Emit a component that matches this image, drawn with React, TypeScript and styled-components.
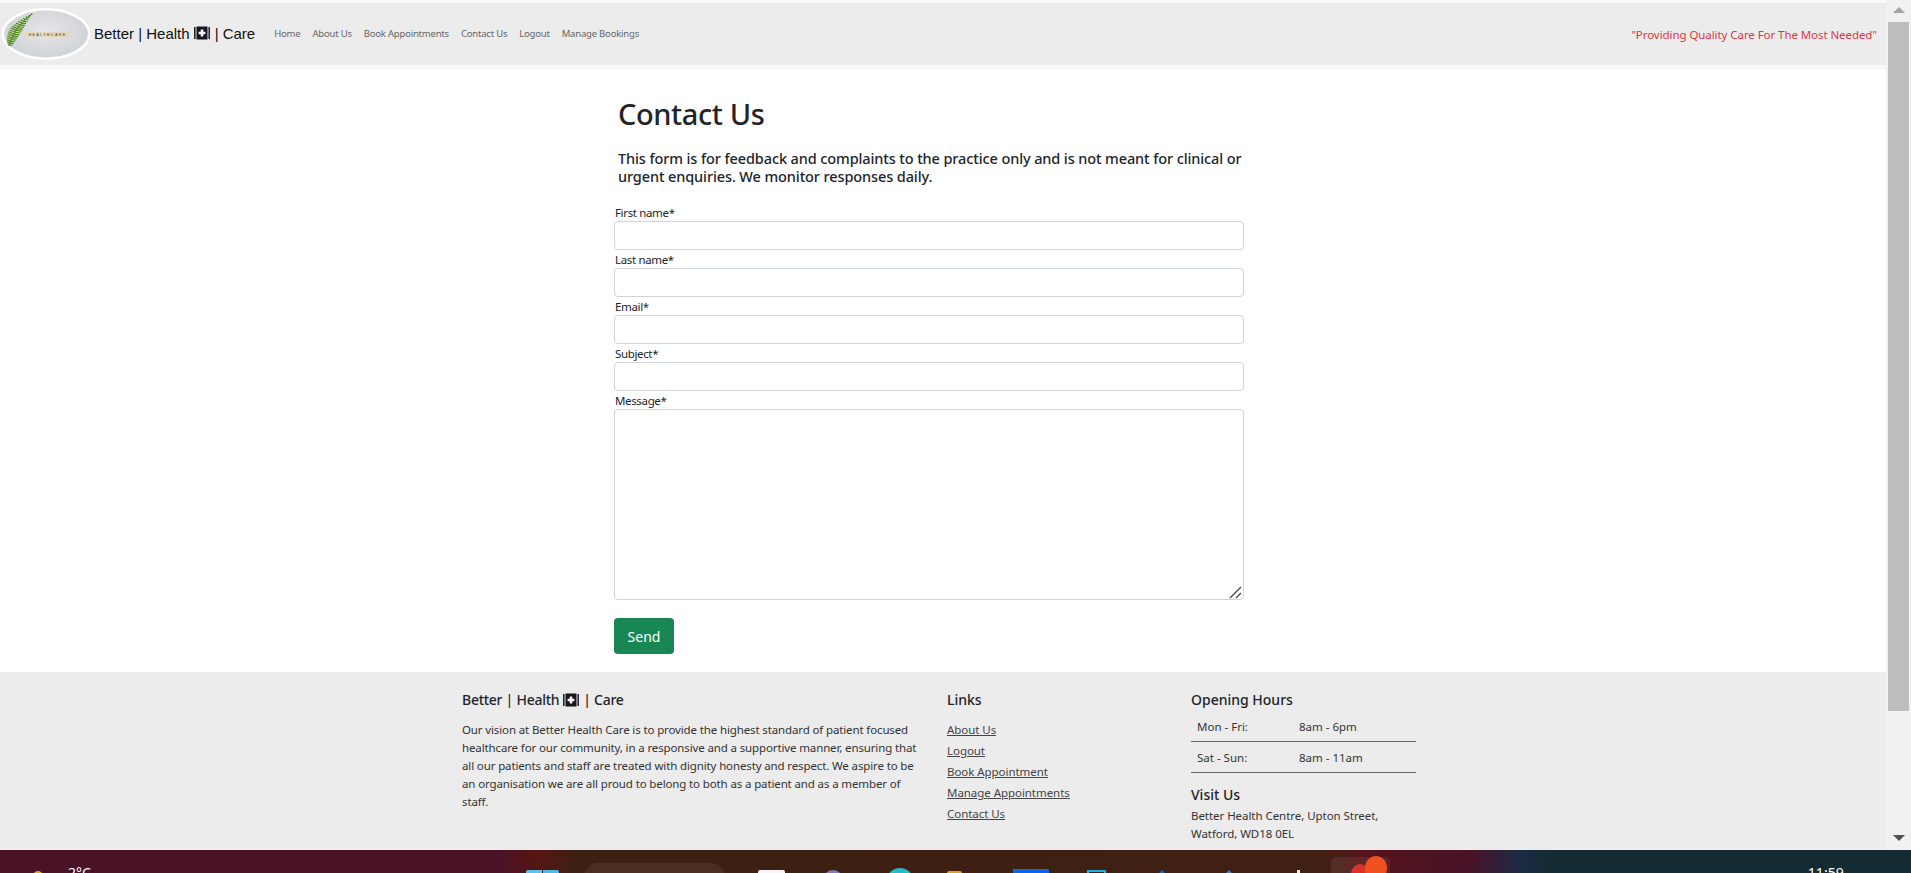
import React from "react";
import styled, { createGlobalStyle } from "styled-components";

const GlobalStyle = createGlobalStyle`
  html, body {
    margin: 0;
    height: 100%;
    overflow: hidden;
    background: #fff;
  }
  * { box-sizing: border-box; }
`;

const UI_FONT = `"Noto Sans", "Open Sans", sans-serif`;

const Screen = styled.div`
  width: 1911px;
  height: 873px;
  display: flex;
  flex-direction: column;
  overflow: hidden;
  font-family: ${UI_FONT};
  color: #212529;
`;

const Viewport = styled.div`
  height: 850px;
  display: flex;
  overflow: hidden;
`;

const Page = styled.div`
  width: 1886px;
  flex-shrink: 0;
`;

const Nav = styled.nav`
  height: 70px;
  padding: 3px 0 5px;
  background: #f8f9fa;
`;

const NavInner = styled.div`
  height: 62px;
  background: #ececec;
  display: flex;
  align-items: center;
  padding-left: 1px;
  padding-right: 9px;
`;

const Logo = styled.svg`
  width: 90px;
  height: 52px;
  flex-shrink: 0;
`;

const Brand = styled.a`
  margin: -2px 0 0 3px;
  font-family: "Liberation Sans", Arial, sans-serif;
  font-size: 15px;
  color: #111;
  display: flex;
  align-items: center;
  gap: 4.5px;
`;

const NavLinks = styled.div`
  display: flex;
  margin-left: 19px;
  gap: 12px;
`;

const NavLink = styled.a`
  font-size: 9.5px;
  letter-spacing: -0.2px;
  color: #666;
  margin-top: -1px;
`;

const Tagline = styled.span`
  margin-left: auto;
  font-size: 11.5px;
  letter-spacing: -0.07px;
  color: #dc3545;
  margin-top: 1px;
`;

const Main = styled.main`
  height: 602px;
  padding-left: 614px;
`;

const Form = styled.form`
  width: 630px;
`;

const Title = styled.h1`
  margin: 0;
  padding: 22px 0 0 4px;
  font-size: 29px;
  letter-spacing: -0.4px;
  line-height: 44px;
  font-weight: 500;
`;

const Notice = styled.p`
  margin: 0;
  padding: 13px 0 0 4px;
  font-size: 14.5px;
  letter-spacing: -0.11px;
  line-height: 18px;
  font-weight: 500;
`;

const Fields = styled.div`
  margin-top: 18px;
`;

const Label = styled.label`
  display: block;
  padding: 1px 0 0 1px;
  font-size: 11.5px;
  letter-spacing: -0.35px;
  line-height: 17px;
  color: #212529;
`;

const Input = styled.input`
  display: block;
  width: 630px;
  height: 29px;
  border: 1px solid #ced4da;
  border-radius: 4px;
  background: #fff;
`;

const MessageBox = styled.div`
  position: relative;
  height: 191px;
`;

const TextArea = styled.textarea`
  display: block;
  width: 630px;
  height: 191px;
  border: 1px solid #ced4da;
  border-radius: 4px;
  background: #fff;
  resize: none;
`;

const ResizeGrip = styled.svg`
  position: absolute;
  right: 2px;
  bottom: 1px;
  width: 13px;
  height: 13px;
`;

const Send = styled.button`
  display: block;
  margin-top: 18px;
  width: 60px;
  height: 36px;
  border: 0;
  border-radius: 4px;
  background: #198754;
  color: #fff;
  font-family: ${UI_FONT};
  font-size: 14px;
`;

const Footer = styled.footer`
  height: 178px;
  background: #ececec;
  padding: 18px 0 0 462px;
  display: grid;
  grid-template-columns: 485px 244px 225px;
  overflow: hidden;
`;

const FooterTitle = styled.h5`
  margin: 0;
  font-size: 14px;
  line-height: 20px;
  font-weight: 500;
  display: flex;
  align-items: center;
  gap: 4px;
`;

const BrandTitle = styled(FooterTitle)`
  letter-spacing: -0.27px;
`;

const FooterText = styled.p`
  margin: 11px 0 0;
  width: 460px;
  font-size: 11.5px;
  letter-spacing: -0.13px;
  line-height: 18px;
  color: #333;
`;

const LinkList = styled.ul`
  list-style: none;
  margin: 9px 0 0;
  padding: 0;
`;

const LinkItem = styled.li`
  font-size: 11.5px;
  letter-spacing: -0.05px;
  line-height: 21px;
`;

const FooterLink = styled.a`
  color: #444;
  text-decoration: underline;
`;

const Hours = styled.div`
  margin-top: 1px;
`;

const HoursRow = styled.div`
  height: 31px;
  display: grid;
  grid-template-columns: 102px 1fr;
  padding: 7px 0 0 6px;
  border-bottom: 1px solid #666;
  font-size: 11.5px;
  line-height: 18px;
  color: #333;
`;

const VisitTitle = styled(FooterTitle)`
  margin-top: 12px;
`;

const Address = styled.p`
  margin: 2px 0 0;
  font-size: 11.5px;
  letter-spacing: -0.05px;
  line-height: 18px;
  color: #333;
`;

const Scrollbar = styled.div`
  flex: 1;
  background: #f1f1f1;
  display: flex;
  flex-direction: column;
  align-items: center;
  padding-top: 7px;
`;

const ArrowUp = styled.div`
  width: 0;
  height: 0;
  border-left: 6px solid transparent;
  border-right: 6px solid transparent;
  border-bottom: 6px solid #a3a3a3;
`;

const Thumb = styled.div`
  width: 21px;
  height: 689px;
  margin-top: 9px;
  background: #bdbdbd;
`;

const ArrowDown = styled.div`
  width: 0;
  height: 0;
  margin-top: 124px;
  border-left: 6px solid transparent;
  border-right: 6px solid transparent;
  border-top: 6px solid #505050;
`;

const Taskbar = styled.div`
  height: 23px;
  display: flex;
  overflow: hidden;
  background: linear-gradient(
    90deg,
    #4a1226 0,
    #4a1226 500px,
    #561513 535px,
    #3b2013 580px,
    #402012 1320px,
    #54141a 1365px,
    #481228 1470px,
    #1c2a44 1520px,
    #132c34 1550px,
    #132c34 100%
  );
`;

const TaskItem = styled.div<{ $left: number; $w: number; $top: number; $bg: string; $round?: string }>`
  flex-shrink: 0;
  margin-left: ${(p) => p.$left}px;
  margin-top: ${(p) => p.$top}px;
  width: ${(p) => p.$w}px;
  height: 24px;
  background: ${(p) => p.$bg};
  border-radius: ${(p) => p.$round || "0"};
`;

const StartButton = styled(TaskItem)`
  background: linear-gradient(90deg, #58c4ee 48%, transparent 48%, transparent 53%, #4cb8ec 53%);
`;

const OutlineTile = styled(TaskItem)`
  background: transparent;
  border: 2px solid ${(p) => p.$bg};
`;

const DiamondTile = styled(TaskItem)`
  height: 14px;
  transform: rotate(45deg);
`;

const TaskText = styled.span<{ $left: number }>`
  flex-shrink: 0;
  margin-left: ${(p) => p.$left}px;
  margin-top: 15px;
  font-family: ${UI_FONT};
  font-size: 14px;
  line-height: 16px;
  color: #fff;
`;

const ActiveTile = styled.div<{ $left: number }>`
  flex-shrink: 0;
  margin-left: ${(p) => p.$left}px;
  margin-top: 7px;
  width: 59px;
  height: 30px;
  border-radius: 5px;
  background: rgba(255, 255, 255, 0.07);
  display: flex;
  justify-content: flex-end;
  padding-right: 3px;
`;

const Badge = styled.div`
  width: 22px;
  height: 24px;
  margin-top: -1px;
  border-radius: 50%;
  background: #f0501e;
  box-shadow: -16px 6px 0 -2px #d8322c;
`;

const CareIcon = () => (
  <svg width="16" height="14" viewBox="0 0 16 14">
    <rect x="0" y="1" width="1.6" height="12" fill="#2a2420" />
    <rect x="14.4" y="1" width="1.6" height="12" fill="#2a2a34" />
    <rect x="2.5" y="0.5" width="11" height="13" fill="#15151c" />
    <path d="M8 3.6v6.8M4.6 7h6.8" stroke="#f4f4f8" strokeWidth="2.6" />
  </svg>
);

// little fern for the logo, one pair of leaflets per step along the stem
const fernLeaves = Array.from({ length: 18 }, (_, i) => {
  const t = i / 17;
  const x = 9 + 6 * t + 16 * t * t;
  const y = 37 - 31 * t;
  const len = 7.5 * Math.sin(Math.PI * Math.min(0.97, t * 0.85 + 0.14));
  return `M${x} ${y}l${-len * 0.75} ${-len * 0.3}M${x} ${y}l${len * 0.7} ${len * 0.1}`;
}).join("");

const LogoMark = () => (
  <Logo viewBox="0 0 90 52">
    <defs>
      <radialGradient id="logoBg" cx="50%" cy="45%" r="60%">
        <stop offset="0%" stopColor="#e5e6e8" />
        <stop offset="100%" stopColor="#cdd0d4" />
      </radialGradient>
    </defs>
    <ellipse cx="45" cy="26" rx="43.2" ry="24.7" fill="url(#logoBg)" stroke="#fff" strokeWidth="2.6" />
    <path d="M8 38 C11 28 18 15 31 6" stroke="#3e6c0e" strokeWidth="1" fill="none" />
    <path d={fernLeaves} stroke="#4f8a12" strokeWidth="1.2" fill="none" />
    <rect x="23" y="24" width="47" height="5" fill="#e4dac0" />
    <text x="46.5" y="28.2" fontSize="3.8" textAnchor="middle" letterSpacing="1.3" fill="#4a4436" fontFamily="Liberation Sans">
      HEALTHCARE
    </text>
  </Logo>
);

const navItems = ["Home", "About Us", "Book Appointments", "Contact Us", "Logout", "Manage Bookings"];
const footerLinks = ["About Us", "Logout", "Book Appointment", "Manage Appointments", "Contact Us"];

export default function App() {
  return (
    <Screen>
      <GlobalStyle />
      <Viewport>
        <Page>
          <Nav>
            <NavInner>
              <LogoMark />
              <Brand>
                Better | Health <CareIcon /> | Care
              </Brand>
              <NavLinks>
                {navItems.map((item) => (
                  <NavLink key={item}>{item}</NavLink>
                ))}
              </NavLinks>
              <Tagline>"Providing Quality Care For The Most Needed"</Tagline>
            </NavInner>
          </Nav>
          <Main>
            <Form>
              <Title>Contact Us</Title>
              <Notice>
                This form is for feedback and complaints to the practice only and is not meant for clinical or urgent
                enquiries. We monitor responses daily.
              </Notice>
              <Fields>
                <Label>First name*</Label>
                <Input />
                <Label>Last name*</Label>
                <Input />
                <Label>Email*</Label>
                <Input />
                <Label>Subject*</Label>
                <Input />
                <Label>Message*</Label>
                <MessageBox>
                  <TextArea />
                  <ResizeGrip viewBox="0 0 13 13">
                    <path d="M1 12L12 1M7 12L12 7" stroke="#444" strokeWidth="1.3" />
                  </ResizeGrip>
                </MessageBox>
              </Fields>
              <Send type="button">Send</Send>
            </Form>
          </Main>
          <Footer>
            <div>
              <BrandTitle>
                Better | Health <CareIcon /> | Care
              </BrandTitle>
              <FooterText>
                Our vision at Better Health Care is to provide the highest standard of patient focused healthcare for
                our community, in a responsive and a supportive manner, ensuring that all our patients and staff are
                treated with dignity honesty and respect. We aspire to be an organisation we are all proud to belong to
                both as a patient and as a member of staff.
              </FooterText>
            </div>
            <div>
              <FooterTitle>Links</FooterTitle>
              <LinkList>
                {footerLinks.map((item) => (
                  <LinkItem key={item}>
                    <FooterLink>{item}</FooterLink>
                  </LinkItem>
                ))}
              </LinkList>
            </div>
            <div>
              <FooterTitle>Opening Hours</FooterTitle>
              <Hours>
                <HoursRow>
                  <span>Mon - Fri:</span>
                  <span>8am - 6pm</span>
                </HoursRow>
                <HoursRow>
                  <span>Sat - Sun:</span>
                  <span>8am - 11am</span>
                </HoursRow>
              </Hours>
              <VisitTitle>Visit Us</VisitTitle>
              <Address>
                Better Health Centre, Upton Street,
                <br />
                Watford, WD18 0EL
              </Address>
            </div>
          </Footer>
        </Page>
        <Scrollbar>
          <ArrowUp />
          <Thumb />
          <ArrowDown />
        </Scrollbar>
      </Viewport>
      <Taskbar>
        <TaskItem $left={33} $w={10} $top={21} $bg="#e0a81c" $round="5px 5px 0 0" />
        <TaskText $left={25}>2°C</TaskText>
        <StartButton $left={435} $w={33} $top={20} $bg="#58c4ee" $round="2px 2px 0 0" />
        <TaskItem $left={25} $w={141} $top={13} $bg="#4a2e20" $round="14px 14px 0 0" />
        <TaskItem $left={33} $w={27} $top={20} $bg="#f6f6f6" $round="2px 2px 0 0" />
        <TaskItem $left={37} $w={22} $top={20} $bg="#8378c0" $round="50%" />
        <TaskItem $left={43} $w={26} $top={18} $bg="#22bccc" $round="50%" />
        <TaskItem $left={34} $w={15} $top={21} $bg="#e0a020" $round="2px 2px 0 0" />
        <TaskItem $left={51} $w={36} $top={19} $bg="#0a66e8" />
        <OutlineTile $left={38} $w={19} $top={20} $bg="#18b4e8" />
        <DiamondTile $left={49} $w={14} $top={23} $bg="#0a6cc8" />
        <DiamondTile $left={53} $w={14} $top={23} $bg="#3a7cd0" />
        <TaskItem $left={61} $w={3} $top={20} $bg="#f2f2f2" />
        <ActiveTile $left={31}>
          <Badge />
        </ActiveTile>
        <TaskText $left={418}>11:59</TaskText>
      </Taskbar>
    </Screen>
  );
}
